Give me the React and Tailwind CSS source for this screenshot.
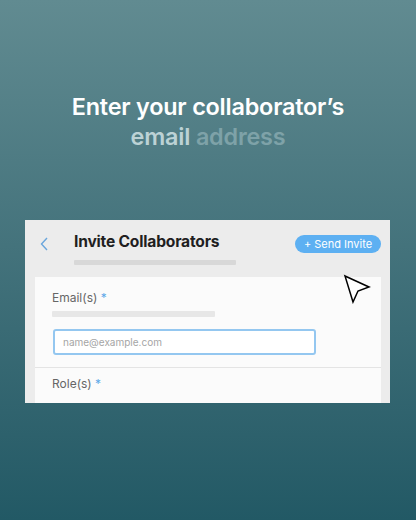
export default function App() {
  return (
    <div
      className="relative w-[416px] h-[520px] overflow-hidden flex flex-col bg-gradient-to-b from-[#618b91] to-[#225965]"
      style={{ fontFamily: "Inter, 'Open Sans', sans-serif" }}
    >
      <div className="pt-[92px] text-center text-[23.4px] leading-[30px] font-semibold tracking-[-0.2px]">
        <div className="text-white">Enter your collaborator’s</div>
        <div>
          <span className="text-[#bcd2d5]">email</span>{" "}
          <span className="text-[#7ea2a8]">address</span>
        </div>
      </div>

      <div className="relative mt-[68px] ml-[25px] w-[365px] h-[183px] bg-[#ececec] flex flex-col">
        <div className="flex items-start pt-[12px] pl-[15px] pr-[9px] h-[57px]">
          <svg width="8" height="14" viewBox="0 0 8 14" className="mt-[5px]">
            <path d="M7 1 L1.5 7 L7 13" fill="none" stroke="#6aa6dc" strokeWidth="1.4" />
          </svg>
          <div className="ml-[26px] flex flex-col">
            <div className="text-[15.6px] leading-[20px] font-bold text-[#1f1f1f] tracking-[-0.2px]">
              Invite Collaborators
            </div>
            <div className="mt-[8px] h-[5px] w-[162px] bg-[#d8d8d8] rounded-[1px]" />
          </div>
          <div className="ml-auto mt-[3px] h-[18px] w-[86px] rounded-full bg-[#5db0f2] text-white text-[11px] leading-[18px] text-center">
            + Send Invite
          </div>
        </div>
        <div className="ml-[10px] mr-[9px] flex-1 bg-[#fbfbfb] flex flex-col">
          <div className="pt-[13px] pl-[17px] text-[12px] leading-[16px] text-[#666]">
            Email(s) <span className="text-[#5da8e8]">*</span>
          </div>
          <div className="ml-[17px] mt-[5px] h-[6px] w-[163px] bg-[#e7e7e7] rounded-[1px]" />
          <div className="ml-[18px] mt-[12px] h-[26px] w-[263px] border-2 border-[#94c7f0] rounded-[3px] bg-white flex items-center pl-[8px] text-[10px] text-[#a5a5a5]">
            name@example.com
          </div>
          <div className="mt-[12px] border-t border-[#e4e4e4]" />
          <div className="pt-[8px] pl-[17px] text-[12px] leading-[16px] text-[#666]">
            Role(s) <span className="text-[#5da8e8]">*</span>
          </div>
        </div>
        <svg
          width="30"
          height="30"
          viewBox="0 0 30 30"
          className="absolute left-[318px] top-[54px]"
        >
          <path d="M2 2 L26 13 L15 17 L10 28 Z" fill="white" stroke="black" strokeWidth="1.5" strokeLinejoin="miter" />
        </svg>
      </div>
    </div>
  );
}
